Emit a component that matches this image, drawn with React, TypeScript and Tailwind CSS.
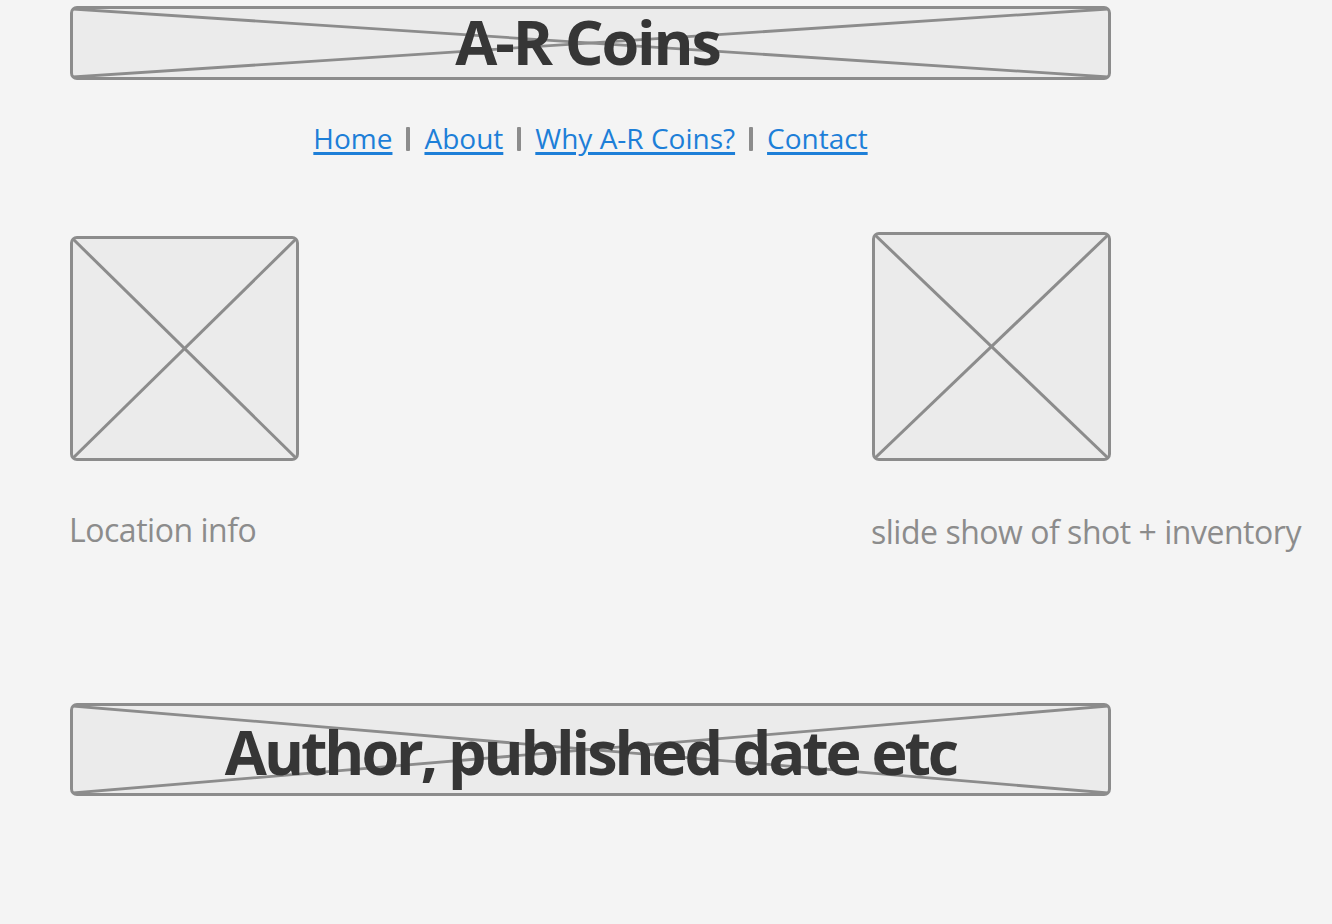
import React from "react";

const font = { fontFamily: '"Open Sans", "Noto Sans", sans-serif' };

function Cross({ width = 3 }: { width?: number }) {
    return (
        <svg className="absolute inset-0 w-full h-full pointer-events-none" preserveAspectRatio="none">
            <line x1="0" y1="0" x2="100%" y2="100%" stroke="#8c8c8c" strokeWidth={width} />
            <line x1="100%" y1="0" x2="0" y2="100%" stroke="#8c8c8c" strokeWidth={width} />
        </svg>
    );
}

function Placeholder({ className = "", children, line = 3 }: { className?: string; children?: React.ReactNode; line?: number }) {
    return (
        <div className={`relative rounded-[7px] border-[3px] border-[#8c8c8c] bg-[#ebebeb] ${className}`}>
            <Cross width={line} />
            {children}
        </div>
    );
}

export default function App() {
    const links = ["Home", "About", "Why A-R Coins?", "Contact"];

    return (
        <div className="min-h-[924px] w-full bg-[#f4f4f4]" style={font}>
            <div className="pl-[70px] pt-[6px] w-[1111px]">
                {/* Header */}
                <Placeholder className="h-[74px] flex items-center justify-center" line={2.8}>
                    <h1 className="relative text-[61px] font-bold leading-none tracking-[-0.035em] text-[#363636] -mt-[4px] -ml-[6px]">
                        A-R Coins
                    </h1>
                </Placeholder>

                {/* Nav */}
                <nav className="mt-[40px] h-[36px] flex justify-center items-center text-[28px] leading-[36px]">
                    {links.map((l, i) => (
                        <React.Fragment key={l}>
                            {i > 0 && <span className="mx-[14px] mt-[2px] block w-[4px] h-[24px] shrink-0 rounded-[1px] bg-[#8c8c8c]" />}
                            <a href="#" className="text-[#1d7fd8] underline underline-offset-[3px] decoration-[2.5px]">
                                {l}
                            </a>
                        </React.Fragment>
                    ))}
                </nav>

                {/* Content */}
                <div className="mt-[76px] flex justify-between items-end">
                    <Placeholder className="w-[229px] h-[225px]" />
                    <Placeholder className="w-[239px] h-[229px]" />
                </div>
                <div className="mt-[49px] flex justify-between text-[32px] leading-[40px] font-medium text-[#8c8c8c] tracking-[-0.015em]">
                    <span className="-ml-[1px]">Location info</span>
                    <span className="w-[240px] whitespace-nowrap mt-[2px]">slide show of shot + inventory</span>
                </div>

                {/* Footer */}
                <Placeholder className="mt-[151px] h-[93px] flex items-center justify-center" line={2.8}>
                    <p className="relative text-[61px] font-bold leading-none tracking-[-0.05em] text-[#363636] mt-[4px]">
                        Author, published date etc
                    </p>
                </Placeholder>
            </div>
        </div>
    );
}
